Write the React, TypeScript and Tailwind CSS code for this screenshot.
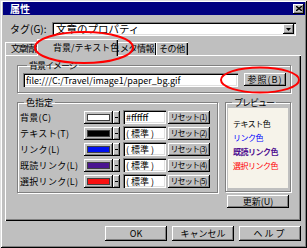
import React from "react";

const RAISED =
  "bg-[#c0c0c0] shadow-[inset_-1px_-1px_0_#000,inset_1px_1px_0_#fff,inset_-2px_-2px_0_#808080]";
const SUNKEN =
  "bg-white shadow-[inset_1px_1px_0_#808080,inset_2px_2px_0_#000,inset_-1px_-1px_0_#fff,inset_-2px_-2px_0_#dfdfdf]";

function Btn({ label, w, h = "h-[13px]", cls = "" }: { label: string; w: string; h?: string; cls?: string }) {
  return (
    <div className={`${RAISED} ${w} ${h} shrink-0 flex items-center justify-center whitespace-nowrap`}>
      <span className={cls}>{label}</span>
    </div>
  );
}

function DownArrow() {
  return (
    <svg width="5" height="3" viewBox="0 0 5 3">
      <path d="M0 0h5L2.5 3z" fill="#000" />
    </svg>
  );
}

const rows = [
  { label: "背景(C)", color: "bg-white", value: "#ffffff", reset: "リセット(1)" },
  { label: "テキスト(T)", color: "bg-black", value: "( 標準 )", reset: "リセット(2)" },
  { label: "リンク(L)", color: "bg-[#0010f0]", value: "( 標準 )", reset: "リセット(3)" },
  { label: "既読リンク(L)", color: "bg-[#4a1590]", value: "( 標準 )", reset: "リセット(4)" },
  { label: "選択リンク(L)", color: "bg-[#f81010]", value: "( 標準 )", reset: "リセット(5)" },
];

export default function App() {
  return (
    <div className="w-[307px] h-[248px] relative overflow-hidden bg-[#bfbfbf] shadow-[inset_1px_1px_0_#dfdfdf,inset_-1px_-1px_0_#000,inset_2px_2px_0_#fff,inset_-2px_-2px_0_#808080] pt-[2px] pl-[3px] pr-[2px] flex flex-col font-['Noto_Sans_CJK_JP','Noto_Sans',sans-serif] text-[9px] text-black leading-none">
      {/* title bar */}
      <div className="h-[13px] bg-[#000080] flex items-center justify-between pl-[7px] pr-[1px] shrink-0">
        <span className="text-white font-bold text-[10px]">属性</span>
        <div className={`${RAISED} w-[11px] h-[10px] flex items-center justify-center`}>
          <svg width="6" height="5" viewBox="0 0 6 5">
            <path d="M0 0L6 5M6 0L0 5" stroke="#000" strokeWidth="1.4" />
          </svg>
        </div>
      </div>

      {/* tag row */}
      <div className="mt-[7px] h-[14px] flex items-center pl-[7px] shrink-0 text-[10px]">
        <span className="w-[42px] whitespace-nowrap">タグ(G):</span>
        <div className={`${SUNKEN} w-[244px] h-[14px] flex items-center justify-between pl-[4px] pr-[2px]`}>
          <span className="text-[10.5px]">文章のプロパティ</span>
          <div className={`${RAISED} w-[11px] h-[10px] flex items-center justify-center`}>
            <DownArrow />
          </div>
        </div>
      </div>

      {/* tabs */}
      <div className="mt-[3px] h-[16px] flex items-end pl-[2px] shrink-0">
        <div className="w-[34px] h-[13px] bg-[#bfbfbf] shadow-[inset_1px_1px_0_#fff,inset_-1px_0_0_#000] flex items-center pl-[6px] whitespace-nowrap">
          <span className="tracking-[-1.6px]">文章情報</span>
        </div>
        <div className="relative z-10 w-[81px] h-[17px] -mb-[1px] -mx-[2px] bg-[#bfbfbf] shadow-[inset_1px_1px_0_#fff,inset_-1px_0_0_#000,inset_-2px_0_0_#808080] flex items-start pt-[4px] pl-[16px] whitespace-nowrap">
          背景/テキスト色
        </div>
        <div className="w-[40px] h-[13px] bg-[#bfbfbf] shadow-[inset_0_1px_0_#fff,inset_-1px_0_0_#000] flex items-center pl-[4px] whitespace-nowrap">
          <span className="tracking-[-0.5px]">メタ情報</span>
        </div>
        <div className="w-[32px] h-[13px] bg-[#bfbfbf] shadow-[inset_1px_1px_0_#fff,inset_-1px_0_0_#000,inset_-2px_0_0_#808080] flex items-center pl-[3px] whitespace-nowrap">
          <span className="tracking-[-0.4px]">その他</span>
        </div>
      </div>

      {/* panel */}
      <div className="ml-[2px] w-[296px] h-[166px] shrink-0 bg-[#bfbfbf] shadow-[inset_1px_1px_0_#fff,inset_-1px_-1px_0_#000,inset_-2px_-2px_0_#808080] pl-[12px] pr-[10px] pt-[6px] flex flex-col">
        <fieldset className="h-[32px] border border-[#808080] shadow-[inset_1px_1px_0_#fff,1px_1px_0_#fff] pl-[5px] pt-[3px] flex items-start">
          <legend className="ml-[4px] px-[2px] tracking-[-1px]">背景イメージ</legend>
          <div className={`${SUNKEN} w-[215px] h-[14px] flex items-center pl-[3px] whitespace-nowrap overflow-hidden`}>
            file:///C:/Travel/image1/paper_bg.gif
          </div>
          <div className="ml-[6px]">
            <Btn label="参照(B)" w="w-[42px]" cls="tracking-[1px]" />
          </div>
        </fieldset>

        <div className="mt-[5px] flex gap-[7px]">
          <fieldset className="w-[201px] h-[95px] border border-[#808080] shadow-[inset_1px_1px_0_#fff,1px_1px_0_#fff] pl-[2px] pt-[3px] flex flex-col gap-[2px]">
            <legend className="ml-[4px] px-[2px]">色指定</legend>
            {rows.map((r) => (
              <div key={r.reset} className="h-[14px] flex items-center">
                <span className="w-[64px] whitespace-nowrap tracking-[0.3px]">{r.label}</span>
                <div className={`${RAISED} w-[29px] h-[13px] p-[3px] flex`}>
                  <div className={`${r.color} flex-1 shadow-[inset_0_0_0_1px_#404040]`} />
                </div>
                <div className={`${RAISED} w-[7px] h-[13px] flex items-center justify-center`}>
                  <div className="w-[3px] h-[1px] bg-black" />
                </div>
                <div className={`${SUNKEN} ml-[3px] w-[43px] h-[14px] flex items-center pl-[3px] whitespace-nowrap`}>
                  {r.value}
                </div>
                <div className="ml-[2px]">
                  <Btn label={r.reset} w="w-[42px]" cls="text-[8px] tracking-[-0.8px] pr-[1px]" />
                </div>
              </div>
            ))}
          </fieldset>

          <div className="flex flex-col">
            <fieldset className="w-[66px] h-[94px] border border-[#808080] shadow-[inset_1px_1px_0_#fff,1px_1px_0_#fff] pl-[2px] pt-[1px]">
              <legend className="ml-[4px] px-[2px] whitespace-nowrap tracking-[-1px]">プレビュー</legend>
              <div className="w-[60px] h-[80px] bg-[#f6f3ea] pt-[9px] pl-[5px] flex flex-col leading-[14px] whitespace-nowrap text-[8px] tracking-[-0.5px]">
                <span className="text-black">テキスト色</span>
                <span className="text-[#0000ff]">リンク色</span>
                <span className="text-[#501090] font-bold">既読リンク色</span>
                <span className="text-[#ff0000]">選択リンク色</span>
              </div>
            </fieldset>
            <div className="mt-[3px] ml-[2px]">
              <Btn label="更新(U)" w="w-[62px]" />
            </div>
          </div>
        </div>
      </div>

      {/* bottom buttons */}
      <div className="mt-[5px] flex justify-end gap-[5px] pr-[4px]">
        <Btn label="OK" w="w-[62px]" h="h-[15px]" />
        <Btn label="キャンセル" w="w-[62px]" h="h-[15px]" />
        <Btn label="ヘルプ" w="w-[62px]" h="h-[15px]" cls="tracking-[2px]" />
      </div>

      {/* red annotation ellipses */}
      <svg className="absolute left-0 top-0 pointer-events-none z-20" width="307" height="248">
        <ellipse cx="84" cy="47.5" rx="49" ry="15.5" fill="none" stroke="#ff0000" strokeWidth="2" />
        <ellipse cx="260" cy="80" rx="39" ry="12.5" fill="none" stroke="#ff0000" strokeWidth="2" />
      </svg>
    </div>
  );
}
